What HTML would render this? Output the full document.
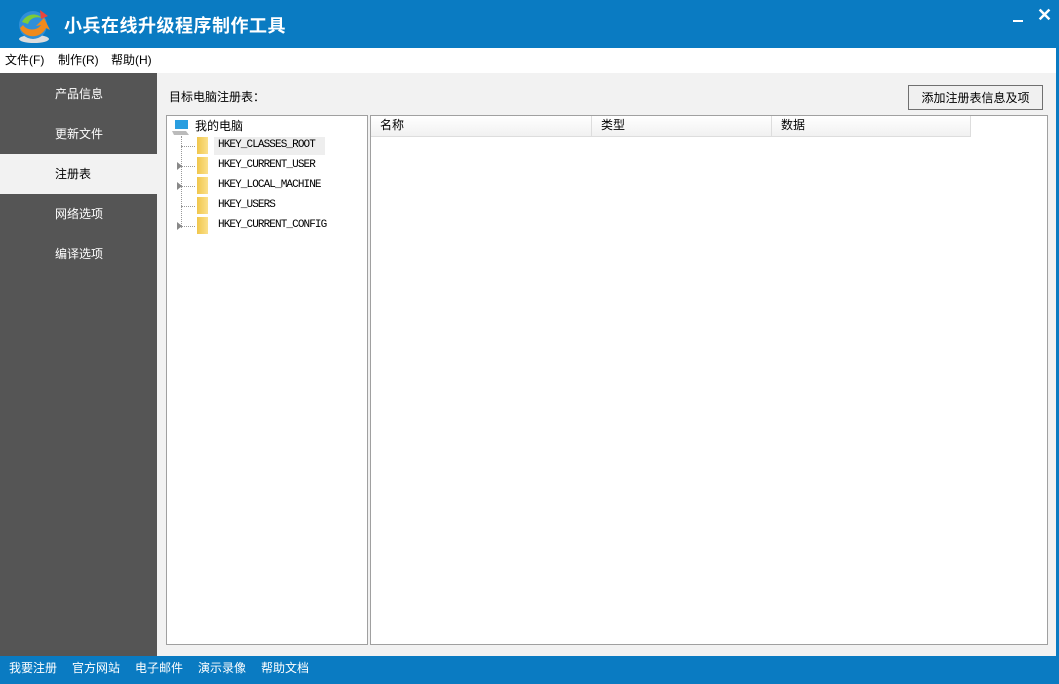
<!DOCTYPE html>
<html><head><meta charset="utf-8"><style>
*{margin:0;padding:0;box-sizing:border-box}
body{width:1059px;height:684px;overflow:hidden;position:relative;background:#f2f2f2;font-family:"Liberation Sans","Noto Sans CJK SC",sans-serif;font-size:12px;color:#000}
.abs{position:absolute}
#title{left:0;top:0;width:1059px;height:48px;background:#0a7bc2}
#title .t{left:64px;top:12px;color:#fff;font-size:18px;font-weight:bold;letter-spacing:0.5px}
#menu{left:0;top:48px;width:1056px;height:25px;background:#fff}
#menu span{position:absolute;top:3px;font-size:12px}
#side{left:0;top:73px;width:157px;height:583px;background:#555}
.item{position:absolute;left:0;width:157px;height:40px;color:#fff;font-size:12px;padding:11px 0 0 55px}
.sel{background:#f2f2f2;color:#000}
#status{left:0;top:656px;width:1059px;height:28px;background:#0a7bc2}
#status span{position:absolute;top:3px;color:#fff;font-size:12px}
#rb{left:1056px;top:48px;width:3px;height:608px;background:#0a7bc2}
#tree{left:166px;top:115px;width:202px;height:530px;background:#fff;border:1px solid #a0a0a0}
#list{left:370px;top:115px;width:678px;height:530px;background:#fff;border:1px solid #a0a0a0}
.hd{position:absolute;top:0;height:21px;background:linear-gradient(#fff,#f1f1f1);border-right:1px solid #ddd;border-bottom:1px solid #ddd;padding:0 0 0 9px}
.node{position:absolute;left:51px;font-family:"Liberation Mono","Noto Sans CJK SC",monospace;font-size:11px;letter-spacing:-0.9px}
.fold{position:absolute;left:30px;width:11px;height:17px;background:linear-gradient(90deg,#f0c64c,#fbe08a)}
.dot{position:absolute;left:14px;width:14px;border-top:1px dotted #999}
.arr{position:absolute;left:10px;width:0;height:0;border-left:5px solid #888;border-top:4px solid transparent;border-bottom:4px solid transparent}
#btn{left:908px;top:85px;width:135px;height:25px;border:1px solid #707070;background:#f0f0f0;text-align:center;padding-top:3px}
</style></head><body>
<div id="title" class="abs">
<svg class="abs" style="left:14px;top:6px" width="40" height="40" viewBox="0 0 40 40"><ellipse cx="20" cy="33" rx="15" ry="4" fill="#ddd"/><circle cx="19" cy="19" r="14" fill="#2f8fd8"/><path d="M8 16c4-8 14-10 20-4-6-2-12 0-14 6z" fill="#7ccb3a"/><path d="M6 22c4 10 20 12 26 0l4 2-6-12-8 8 5-1c-4 6-14 6-18 0z" fill="#f08a1c"/><path d="M26 4l8 6-7 3z" fill="#e8453c"/></svg>
<div class="abs t">小兵在线升级程序制作工具</div>
<div class="abs" style="left:1013px;width:10px;border-top:2px solid #fff;top:20px"></div>
<div class="abs" style="left:1037px;top:5px;color:#fff;font-size:18px;font-weight:bold">✕</div>
</div>
<div id="menu" class="abs"><span style="left:5px">文件(F)</span><span style="left:58px">制作(R)</span><span style="left:111px">帮助(H)</span></div>
<div id="rb" class="abs"></div>
<div id="side" class="abs">
<div class="item" style="top:1px">产品信息</div>
<div class="item" style="top:41px">更新文件</div>
<div class="item sel" style="top:81px">注册表</div>
<div class="item" style="top:121px">网络选项</div>
<div class="item" style="top:161px">编译选项</div>
</div>
<div class="abs" style="left:169px;top:88px">目标电脑注册表：</div>
<div id="btn" class="abs">添加注册表信息及项</div>
<div id="tree" class="abs">
<svg class="abs" style="left:5px;top:2px" width="18" height="18"><rect x="3" y="2" width="13" height="9" fill="#2a9ee0"/><path d="M0 13h14l3 4H2z" fill="#bbb"/></svg>
<div class="abs" style="left:28px;top:1px">我的电脑</div>
<div class="abs" style="left:14px;top:20px;height:92px;border-left:1px dotted #999"></div>
<div class="abs" style="left:47px;top:21px;width:111px;height:18px;background:#eee"></div>
<div class="dot" style="top:30px"></div><div class="fold" style="top:21px"></div><div class="node" style="top:23px">HKEY_CLASSES_ROOT</div>
<div class="dot" style="top:50px"></div><div class="arr" style="top:46px"></div><div class="fold" style="top:41px"></div><div class="node" style="top:43px">HKEY_CURRENT_USER</div>
<div class="dot" style="top:70px"></div><div class="arr" style="top:66px"></div><div class="fold" style="top:61px"></div><div class="node" style="top:63px">HKEY_LOCAL_MACHINE</div>
<div class="dot" style="top:90px"></div><div class="fold" style="top:81px"></div><div class="node" style="top:83px">HKEY_USERS</div>
<div class="dot" style="top:110px"></div><div class="arr" style="top:106px"></div><div class="fold" style="top:101px"></div><div class="node" style="top:103px">HKEY_CURRENT_CONFIG</div>
</div>
<div id="list" class="abs">
<div class="hd" style="left:0;width:221px">名称</div>
<div class="hd" style="left:221px;width:180px">类型</div>
<div class="hd" style="left:401px;width:199px">数据</div>
</div>
<div id="status" class="abs"><span style="left:9px">我要注册</span><span style="left:72px">官方网站</span><span style="left:135px">电子邮件</span><span style="left:198px">演示录像</span><span style="left:261px">帮助文档</span></div>
</body></html>
